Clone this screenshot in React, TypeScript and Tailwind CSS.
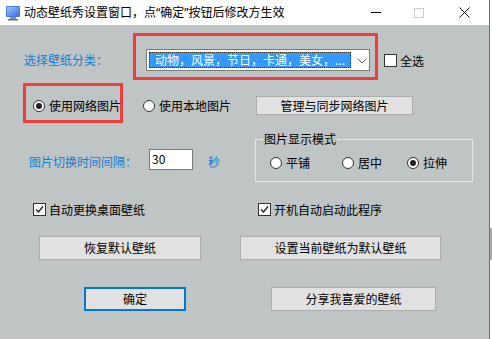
import React from "react";

const F = { fontFamily: '"Noto Sans CJK SC", "Noto Sans", sans-serif' };
const T = { fontFamily: '"Noto Sans", "Noto Sans CJK SC", sans-serif' };

function Radio({ checked }: { checked?: boolean }) {
  return (
    <div className="w-[12px] h-[12px] rounded-full border border-[#333] bg-white flex items-center justify-center shrink-0">
      {checked && <div className="w-[6px] h-[6px] rounded-full bg-[#222]" />}
    </div>
  );
}

function Check({ checked }: { checked?: boolean }) {
  return (
    <div className="w-[13px] h-[13px] border border-[#333] bg-white flex items-center justify-center shrink-0">
      {checked && (
        <svg width="9" height="9" viewBox="0 0 9 9">
          <path d="M1 4.5 L3.5 7 L8 1.5" fill="none" stroke="#222" strokeWidth="1.4" />
        </svg>
      )}
    </div>
  );
}

function Btn({ w, label, primary }: { w: string; label: string; primary?: boolean }) {
  return (
    <div
      className={`${w} h-[24px] bg-[#e1e1e1] flex items-center justify-center text-[12px] leading-[12px] text-black ${
        primary ? "border-2 border-[#0078d7]" : "border border-[#adadad]"
      }`}
    >
      {label}
    </div>
  );
}

export default function App() {
  return (
    <div className="w-[492px] h-[339px] flex bg-white overflow-hidden" style={F}>
      <div className="w-[489px] h-full flex flex-col">
        {/* Title bar */}
        <div className="h-[25px] bg-white flex items-center shrink-0">
          <div className="ml-[5px] w-[16px] h-[16px]">
            <svg width="16" height="16" viewBox="0 0 16 16">
              <defs>
                <linearGradient id="scr" x1="0" y1="0" x2="1" y2="1">
                  <stop offset="0" stopColor="#9fc4ff" />
                  <stop offset="1" stopColor="#3a6fe0" />
                </linearGradient>
              </defs>
              <rect x="1" y="1" width="14" height="11" rx="1" fill="#4a7bd8" />
              <rect x="2" y="2" width="12" height="9" fill="url(#scr)" />
              <rect x="5" y="12" width="6" height="2" fill="#7d8fb5" />
              <rect x="3" y="14" width="10" height="1.5" fill="#5c6e96" />
            </svg>
          </div>
          <div className="ml-[3px] text-[12px] leading-[12px] text-black whitespace-nowrap" style={T}>
            动态壁纸秀设置窗口，点“确定”按钮后修改方生效
          </div>
          <div className="ml-auto flex items-center">
            <div className="w-[10px] h-[1px] bg-black mr-[33px]" />
            <div className="w-[10px] h-[10px] border border-[#cccccc] mr-[35px]" />
            <svg width="11" height="11" viewBox="0 0 11 11" className="mr-[19px]">
              <path d="M0.5 0.5 L10.5 10.5 M10.5 0.5 L0.5 10.5" stroke="#111" strokeWidth="1" />
            </svg>
          </div>
        </div>

        {/* Body */}
        <div className="flex-1 bg-[#bfc4c4] flex flex-col text-[12px] leading-[12px] text-black">
          {/* Row 1 */}
          <div className="mt-[8px] h-[47px] flex items-start">
            <div className="ml-[24px] w-[109px] mt-[21px] text-[#107fd8] whitespace-nowrap">选择壁纸分类：</div>
            <div className="w-[245px] h-[47px] border-[3px] border-[#f03c3c]">
              <div className="ml-[10px] mt-[13px] w-[224px] h-[22px] border border-[#7a7a7a] bg-white flex items-start">
                <div className="ml-[2px] mt-[2px] w-[202px] h-[16px] bg-[#3399ff] border border-dotted border-[#3a2a10] flex items-center">
                  <span className="ml-[5px] text-white whitespace-nowrap">动物，风景，节日，卡通，美女，...</span>
                </div>
                <svg width="10" height="6" viewBox="0 0 10 6" className="ml-[6px] mt-[8px]">
                  <path d="M0.5 0.5 L5 5 L9.5 0.5" fill="none" stroke="#555" strokeWidth="1" />
                </svg>
              </div>
            </div>
            <div className="ml-[6px] mt-[21px] flex items-center">
              <Check />
              <span className="ml-[3px]">全选</span>
            </div>
          </div>

          {/* Row 2 */}
          <div className="mt-[3px] h-[40px] flex items-start">
            <div className="ml-[23px] w-[100px] h-[40px] border-[3px] border-[#f03c3c] flex items-start">
              <div className="ml-[7px] mt-[14px] flex items-center">
                <Radio checked />
                <span className="ml-[4px] whitespace-nowrap">使用网络图片</span>
              </div>
            </div>
            <div className="ml-[20px] w-[113px] mt-[17px] flex items-center">
              <Radio />
              <span className="ml-[4px] whitespace-nowrap">使用本地图片</span>
            </div>
            <div className="mt-[13px] w-[157px] h-[19px] bg-[#e1e1e1] border border-[#adadad] flex items-center justify-center">
              管理与同步网络图片
            </div>
          </div>

          {/* Row 3 */}
          <div className="mt-[16px] h-[43px] flex items-start">
            <div className="ml-[29px] w-[120px] mt-[17px] text-[#107fd8] whitespace-nowrap">图片切换时间间隔：</div>
            <div className="mt-[10px] w-[44px] h-[21px] bg-white border border-[#7a7a7a] pl-[2px] pt-[3px]">30</div>
            <div className="ml-[15px] w-[12px] mt-[17px] text-[#107fd8]">秒</div>
            <div className="ml-[35px] w-[218px] h-[43px] border border-[#e6e8e8] relative flex items-start">
              <div className="absolute -top-[7px] left-[7px] px-[1px] bg-[#bfc4c4]">图片显示模式</div>
              <div className="ml-[14px] mt-[17px] w-[72px] flex items-center">
                <Radio />
                <span className="ml-[4px]">平铺</span>
              </div>
              <div className="mt-[17px] w-[65px] flex items-center">
                <Radio />
                <span className="ml-[4px]">居中</span>
              </div>
              <div className="mt-[17px] flex items-center">
                <Radio checked />
                <span className="ml-[4px]">拉伸</span>
              </div>
            </div>
          </div>

          {/* Row 4 */}
          <div className="mt-[21px] flex items-center">
            <div className="ml-[33px] w-[225px] flex items-center">
              <Check checked />
              <span className="ml-[3px]">自动更换桌面壁纸</span>
            </div>
            <div className="flex items-center">
              <Check checked />
              <span className="ml-[3px]">开机自动启动此程序</span>
            </div>
          </div>

          {/* Row 5 */}
          <div className="mt-[20px] flex">
            <div className="ml-[39px]">
              <Btn w="w-[162px]" label="恢复默认壁纸" />
            </div>
            <div className="ml-[39px]">
              <Btn w="w-[201px]" label="设置当前壁纸为默认壁纸" />
            </div>
          </div>

          {/* Row 6 */}
          <div className="mt-[27px] flex">
            <div className="ml-[84px]">
              <Btn w="w-[102px]" label="确定" primary />
            </div>
            <div className="ml-[85px]">
              <Btn w="w-[165px]" label="分享我喜爱的壁纸" />
            </div>
          </div>
        </div>
      </div>
      <div className="w-[1px] h-full bg-[#2a7fd6]" />
      <div className="w-[2px] h-full flex flex-col bg-white">
        <div className="h-[228px]" />
        <div className="h-[32px] bg-[#a8acac]" />
      </div>
    </div>
  );
}
